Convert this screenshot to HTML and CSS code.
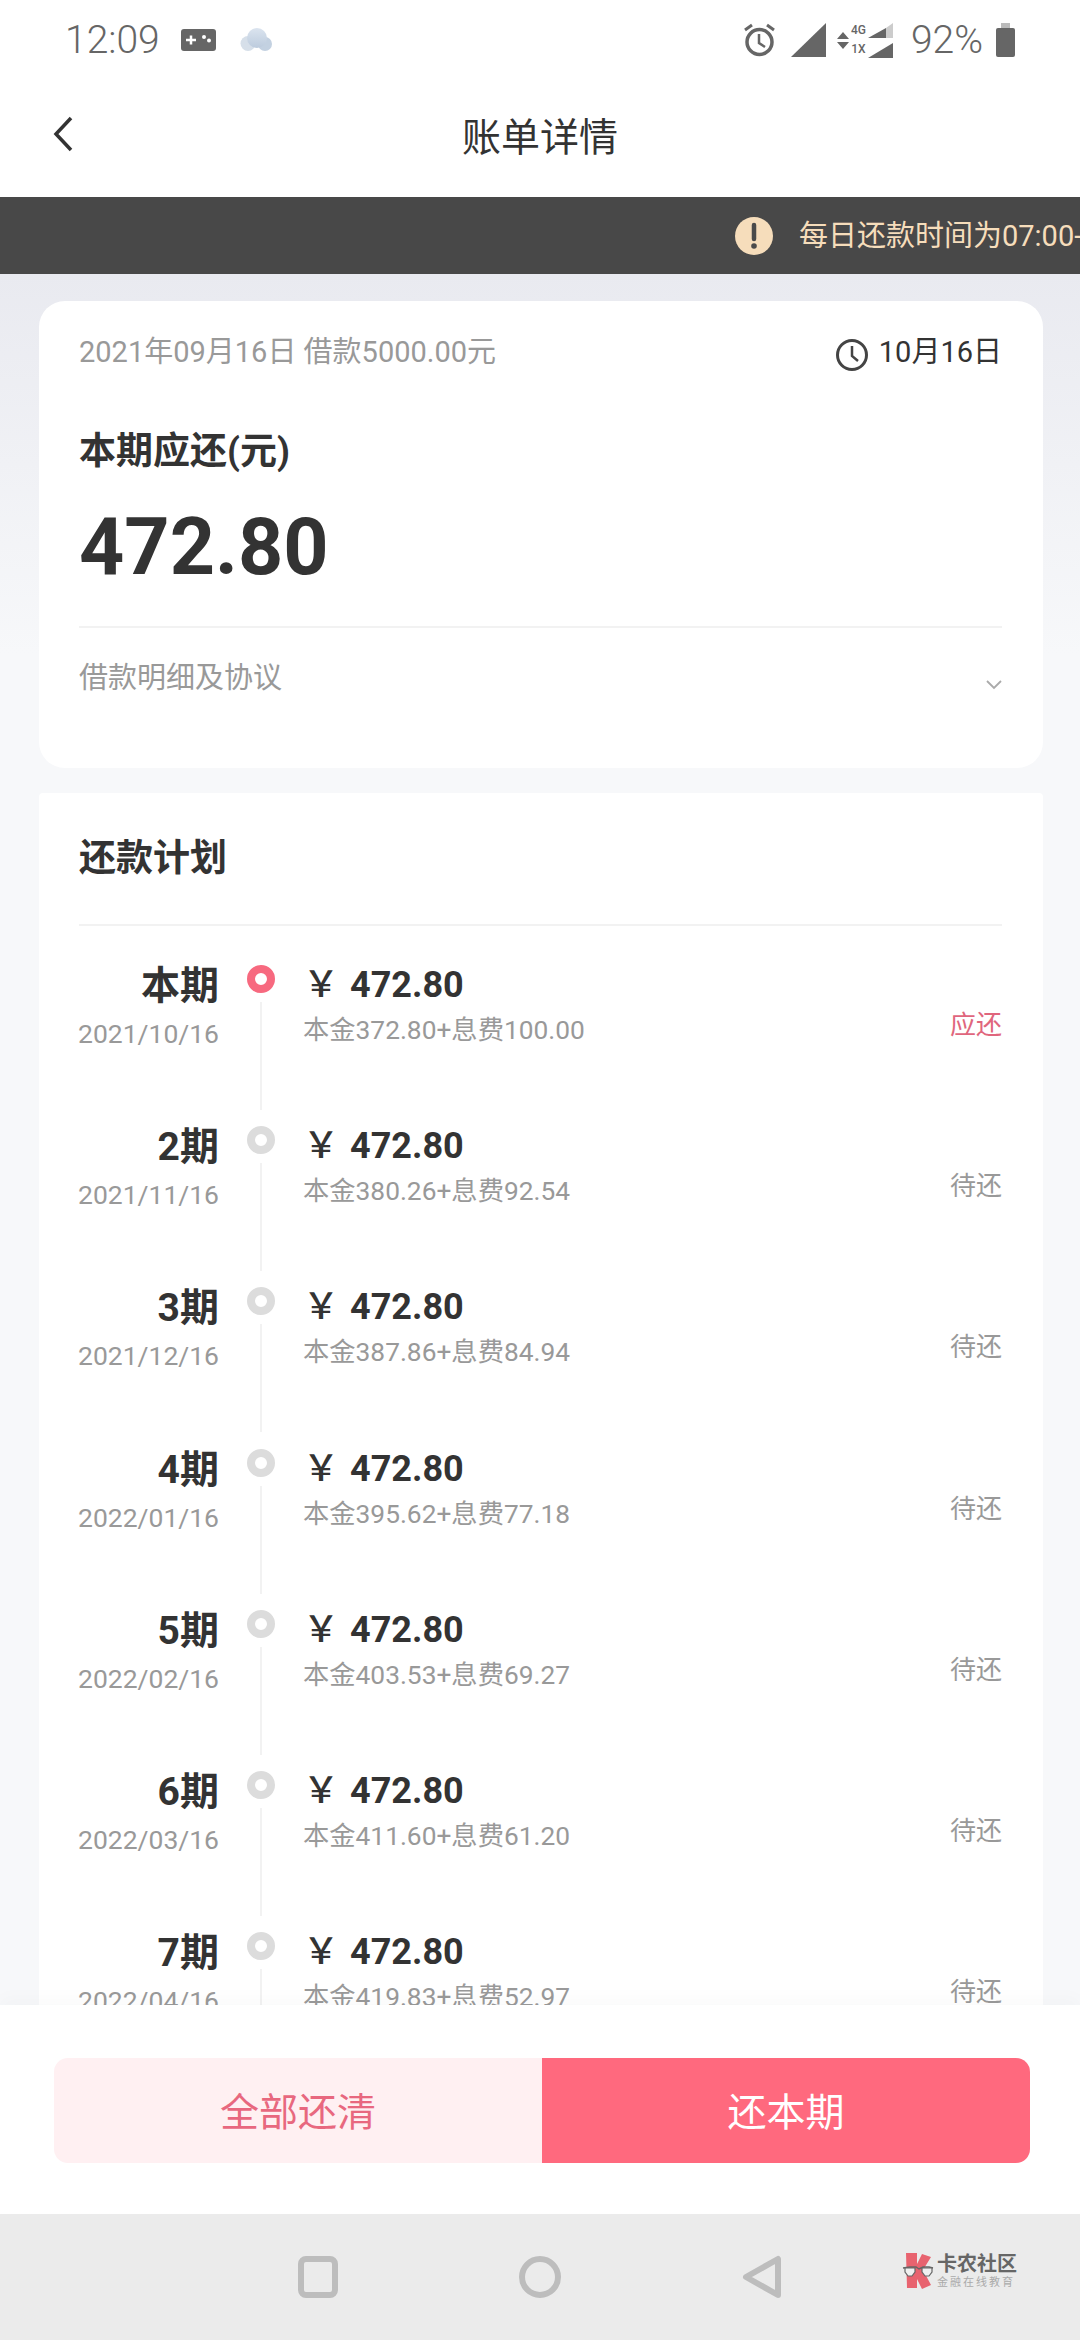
FILE: index.html
```html
<!DOCTYPE html>
<html lang="zh-CN">
<head>
    <meta charset="UTF-8">
    <meta name="viewport" content="width=device-width, initial-scale=1.0">
    <title>账单详情</title>
    <link rel="stylesheet" href="styles.css">
</head>
<body>
<div class="page">

    <div class="status-bar">
        <span class="status-time">12:09</span>
        <svg class="icon-game" width="35" height="22" viewBox="0 0 35 22">
            <rect width="35" height="22" rx="3" fill="#666"/>
            <path d="M5 11h10M10 6.500v9" stroke="#fff" stroke-width="2.500" fill="none"/>
            <circle cx="23" cy="8" r="2" fill="#fff"/>
            <circle cx="28" cy="11.500" r="2" fill="#fff"/>
        </svg>
        <svg class="icon-cloud" width="32" height="24" viewBox="0 0 32 24">
            <defs>
                <linearGradient id="cloudFill" x1="0" y1="0" x2="0" y2="1">
                    <stop offset="0" stop-color="#dbe4ef"/>
                    <stop offset="1" stop-color="#bccbdd"/>
                </linearGradient>
            </defs>
            <circle cx="8" cy="15.500" r="7.500" fill="#d6dfe9"/>
            <circle cx="25" cy="16" r="7" fill="#c3d1e1"/>
            <circle cx="17" cy="10" r="10" fill="url(#cloudFill)"/>
        </svg>
        <div class="status-right">
            <svg class="icon-alarm" width="33" height="34" viewBox="0 0 33 34">
                <circle cx="16.500" cy="19" r="12.500" fill="none" stroke="#666" stroke-width="3.500"/>
                <path d="M16 11v9l6 4" fill="none" stroke="#666" stroke-width="2.500"/>
                <path d="M2 7l7-5M31 7l-7-5" stroke="#666" stroke-width="3" fill="none"/>
            </svg>
            <svg class="icon-signal" width="35" height="34" viewBox="0 0 35 34">
                <path d="M0 34L35 0V34Z" fill="#666"/>
            </svg>
            <div class="net">
                <svg width="12" height="17" viewBox="0 0 12 17">
                    <path d="M6 0l6 7H0ZM6 17l6-7H0Z" fill="#666"/>
                </svg>
                <div class="net-labels">
                    <span>4G</span>
                    <span>1X</span>
                </div>
                <svg width="26" height="35" viewBox="0 0 26 35">
                    <path d="M0 15L18 5V15Z" fill="#666"/>
                    <path d="M18 5L25 0V15H18Z" fill="#ccc"/>
                    <path d="M0 35L25 20V35Z" fill="#666"/>
                </svg>
            </div>
            <span class="status-battery">92%</span>
            <svg width="19" height="34" viewBox="0 0 19 34">
                <rect x="5" width="9" height="5" fill="#bbb"/>
                <rect y="5" width="19" height="29" rx="2" fill="#666"/>
            </svg>
        </div>
    </div>

    <div class="top-bar">
        <svg class="back" width="22" height="36" viewBox="0 0 22 36">
            <path d="M19 2L4 18l15 16" fill="none" stroke="#333" stroke-width="3.500"/>
        </svg>
        <h1 class="top-title">账单详情</h1>
    </div>

    <div class="notice">
        <svg width="38" height="38" viewBox="0 0 38 38">
            <circle cx="19" cy="19" r="19" fill="#f6ddbb"/>
            <path d="M19 8v14" stroke="#4a4a4a" stroke-width="4.500" stroke-linecap="round"/>
            <circle cx="19" cy="29" r="2.800" fill="#4a4a4a"/>
        </svg>
        <span class="notice-text">每日还款时间为07:00-22:00</span>
    </div>

    <div class="content">
        <section class="card summary">
            <div class="summary-top">
                <span class="summary-date">2021年09月16日 借款5000.00元</span>
                <span class="summary-due">
                    <svg width="34" height="34" viewBox="0 0 34 34">
                        <circle cx="17" cy="17" r="14.500" fill="none" stroke="#444" stroke-width="3"/>
                        <path d="M17 8v10l6 5" fill="none" stroke="#444" stroke-width="2.500"/>
                    </svg>
                    10月16日
                </span>
            </div>
            <div class="summary-label">本期应还(元)</div>
            <div class="summary-amount">472.80</div>
            <div class="summary-more">
                <span>借款明细及协议</span>
                <svg width="16" height="10" viewBox="0 0 16 10">
                    <path d="M1 1l7 7 7-7" fill="none" stroke="#aaa" stroke-width="1.800"/>
                </svg>
            </div>
        </section>

        <section class="card plan">
            <h2 class="plan-title">还款计划</h2>
            <div class="plan-list">

                <div class="plan-row current">
                    <div class="when"><strong>本期</strong><span>2021/10/16</span></div>
                    <div class="rail"><i class="dot"></i><i class="line"></i></div>
                    <div class="money"><strong><em>￥</em>472.80</strong><span>本金372.80+息费100.00</span></div>
                    <div class="state">应还</div>
                </div>

                <div class="plan-row">
                    <div class="when"><strong>2期</strong><span>2021/11/16</span></div>
                    <div class="rail"><i class="dot"></i><i class="line"></i></div>
                    <div class="money"><strong><em>￥</em>472.80</strong><span>本金380.26+息费92.54</span></div>
                    <div class="state">待还</div>
                </div>

                <div class="plan-row">
                    <div class="when"><strong>3期</strong><span>2021/12/16</span></div>
                    <div class="rail"><i class="dot"></i><i class="line"></i></div>
                    <div class="money"><strong><em>￥</em>472.80</strong><span>本金387.86+息费84.94</span></div>
                    <div class="state">待还</div>
                </div>

                <div class="plan-row">
                    <div class="when"><strong>4期</strong><span>2022/01/16</span></div>
                    <div class="rail"><i class="dot"></i><i class="line"></i></div>
                    <div class="money"><strong><em>￥</em>472.80</strong><span>本金395.62+息费77.18</span></div>
                    <div class="state">待还</div>
                </div>

                <div class="plan-row">
                    <div class="when"><strong>5期</strong><span>2022/02/16</span></div>
                    <div class="rail"><i class="dot"></i><i class="line"></i></div>
                    <div class="money"><strong><em>￥</em>472.80</strong><span>本金403.53+息费69.27</span></div>
                    <div class="state">待还</div>
                </div>

                <div class="plan-row">
                    <div class="when"><strong>6期</strong><span>2022/03/16</span></div>
                    <div class="rail"><i class="dot"></i><i class="line"></i></div>
                    <div class="money"><strong><em>￥</em>472.80</strong><span>本金411.60+息费61.20</span></div>
                    <div class="state">待还</div>
                </div>

                <div class="plan-row">
                    <div class="when"><strong>7期</strong><span>2022/04/16</span></div>
                    <div class="rail"><i class="dot"></i><i class="line"></i></div>
                    <div class="money"><strong><em>￥</em>472.80</strong><span>本金419.83+息费52.97</span></div>
                    <div class="state">待还</div>
                </div>

            </div>
        </section>
    </div>

    <div class="actions">
        <button class="btn btn-all">全部还清</button>
        <button class="btn btn-current">还本期</button>
    </div>

    <div class="nav-bar">
        <svg width="40" height="42" viewBox="0 0 40 42">
            <rect x="3" y="3" width="34" height="36" rx="5" fill="none" stroke="#bdbdbd" stroke-width="6"/>
        </svg>
        <svg width="42" height="42" viewBox="0 0 42 42">
            <circle cx="21" cy="21" r="18" fill="none" stroke="#bdbdbd" stroke-width="6"/>
        </svg>
        <svg width="40" height="44" viewBox="0 0 40 44">
            <path d="M36 4V40L4 22Z" fill="none" stroke="#bdbdbd" stroke-width="6" stroke-linejoin="round"/>
        </svg>
        <div class="watermark">
            <svg width="32" height="36" viewBox="0 0 32 36">
                <path d="M4 0H15V11L20 1l9 3-8 13 8 15-9 4-5-10v9H5Z" fill="#e8636f"/>
                <path d="M1 15L8 14H14L17 16L21 14H27L31 15" fill="none" stroke="#666" stroke-width="1.500"/>
                <path d="M3 15H13V19L10 23H6L3 19Z" fill="#f0f0f0" stroke="#666" stroke-width="1.200"/>
                <path d="M20 15H30V19L27 23H23L20 19Z" fill="#f0f0f0" stroke="#666" stroke-width="1.200"/>
            </svg>
            <div class="watermark-text">
                <strong>卡农社区</strong>
                <span>金融在线教育</span>
            </div>
        </div>
    </div>

</div>
</body>
</html>
```

FILE: styles.css
```css
* {
    margin: 0;
    padding: 0;
    box-sizing: border-box;
}
body {
    font-family: Roboto, 'Noto Sans CJK SC', sans-serif;
    background-color: #fff;
    color: #333;
}
.page {
    display: flex;
    flex-direction: column;
    width: 1080px;
    height: 2340px;
    overflow: hidden;
}

/* status bar */
.status-bar {
    display: flex;
    align-items: center;
    flex: none;
    height: 80px;
    padding: 0 65px 0 65px;
    color: #666;
}
.status-time {
    font-size: 39px;
    font-weight: 300;
    line-height: 80px;
}
.icon-game {
    margin-left: 21px;
}
.icon-cloud {
    margin-left: 24px;
}
.status-right {
    display: flex;
    align-items: center;
    margin-left: auto;
}
.net {
    display: flex;
    align-items: center;
    margin-left: 11px;
}
.net-labels {
    display: flex;
    flex-direction: column;
    width: 19px;
    font-size: 12px;
    font-weight: 500;
    line-height: 19px;
    text-align: center;
}
.icon-signal {
    margin-left: 15px;
}
.status-battery {
    margin: 0 13px 0 17px;
    font-size: 39px;
    font-weight: 300;
}

/* top bar */
.top-bar {
    display: grid;
    grid-template-columns: 1fr auto 1fr;
    align-items: center;
    flex: none;
    height: 117px;
    padding: 0 52px 10px 52px;
}
.top-title {
    font-size: 39px;
    font-weight: 400;
    color: #333;
}

/* notice */
.notice {
    display: flex;
    align-items: center;
    flex: none;
    height: 77px;
    padding-left: 735px;
    background-color: #484848;
    white-space: nowrap;
    overflow: hidden;
}
.notice svg {
    flex: none;
}
.notice-text {
    flex: none;
    margin: 0 0 5px 26px;
    font-size: 29px;
    color: #f6ddbb;
}

/* scroll area */
.content {
    flex: 1;
    min-height: 0;
    padding: 27px 37px 0 39px;
    background: linear-gradient(#e9eaf0, #f7f8fa 380px);
    overflow: hidden;
}
.card {
    padding: 0 41px 0 40px;
    background-color: #fff;
}
.summary {
    height: 467px;
    border-radius: 26px;
}
.summary-top {
    display: flex;
    justify-content: space-between;
    align-items: center;
    height: 70px;
    padding-top: 32px;
    font-size: 29px;
    line-height: 40px;
}
.summary-date {
    color: #999;
}
.summary-due {
    display: flex;
    align-items: center;
    gap: 10px;
    color: #333;
}
.summary-due svg {
    margin-top: 5px;
}
.summary-label {
    margin-top: 57px;
    font-size: 37px;
    font-weight: 700;
    line-height: 48px;
}
.summary-amount {
    margin-top: 24px;
    font-size: 79px;
    font-weight: 700;
    line-height: 94px;
    padding-bottom: 32px;
    border-bottom: 2px solid #f2f2f2;
}
.summary-more {
    display: flex;
    justify-content: space-between;
    align-items: center;
    margin-top: 30px;
    font-size: 29px;
    line-height: 40px;
    color: #999;
}
.summary-more svg {
    margin-top: 14px;
}
.plan {
    margin-top: 25px;
    border-radius: 4px;
}
.plan-title {
    height: 133px;
    font-size: 37px;
    font-weight: 700;
    line-height: 132px;
    border-bottom: 2px solid #f2f2f2;
}
.plan-list {
    padding-top: 24px;
}
.plan-row {
    display: grid;
    grid-template-columns: 140px 84px 1fr auto;
    height: 161.200px;
}
.when {
    display: flex;
    flex-direction: column;
    align-items: flex-end;
}
.when strong {
    margin-top: 11px;
    font-size: 39px;
    font-weight: 700;
    line-height: 50px;
}
.when span {
    margin-top: 5px;
    font-size: 26.500px;
    line-height: 36px;
    color: #999;
}
.rail {
    display: flex;
    flex-direction: column;
    align-items: center;
    width: 84px;
}
.rail i {
    display: block;
}
.dot {
    flex: none;
    width: 28px;
    height: 28px;
    margin-top: 15px;
    border: 8px solid #dcdcdc;
    border-radius: 50%;
    background-color: #fff;
}
.current .dot {
    border-color: #f7697f;
}
.line {
    width: 2px;
    height: 108px;
    margin-top: 9px;
    background-color: #f2f2f2;
}
.money {
    display: flex;
    flex-direction: column;
}
.money strong {
    margin-top: 9px;
    font-size: 36px;
    font-weight: 700;
    line-height: 44px;
}
.money em {
    display: inline-block;
    width: 47px;
    font-family: 'Noto Sans CJK SC', sans-serif;
    font-style: normal;
    font-weight: 500;
}
.money span {
    margin-top: 5px;
    font-size: 26.300px;
    line-height: 36px;
    color: #999;
}
.state {
    margin-top: 57px;
    font-size: 26px;
    line-height: 36px;
    color: #999;
}
.current .state {
    color: #e0667d;
}

/* bottom buttons */
.actions {
    position: relative;
    display: flex;
    flex: none;
    height: 209px;
    padding: 53px 50px 51px 54px;
    background-color: #fff;
    box-shadow: 0 -8px 16px rgba(0, 0, 0, 0.02);
}
.btn {
    flex: 1;
    padding-bottom: 3px;
    border: none;
    font-family: inherit;
    font-size: 39px;
}
.btn-all {
    border-radius: 14px 0 0 14px;
    background-color: #fff0f2;
    color: #e8687f;
}
.btn-current {
    border-radius: 0 14px 14px 0;
    background-color: #ff697e;
    color: #fff;
}

/* system nav */
.nav-bar {
    position: relative;
    display: flex;
    align-items: center;
    justify-content: center;
    gap: 181px;
    flex: none;
    height: 126px;
    background-color: #ebebeb;
}
.watermark {
    position: absolute;
    right: 63px;
    top: 38px;
    display: flex;
    align-items: center;
    gap: 3px;
}
.watermark-text {
    display: flex;
    flex-direction: column;
}
.watermark-text strong {
    font-size: 20px;
    font-weight: 700;
    line-height: 24px;
    color: #666;
}
.watermark-text span {
    font-size: 11px;
    line-height: 14px;
    letter-spacing: 2px;
    color: #aaa;
}
```
